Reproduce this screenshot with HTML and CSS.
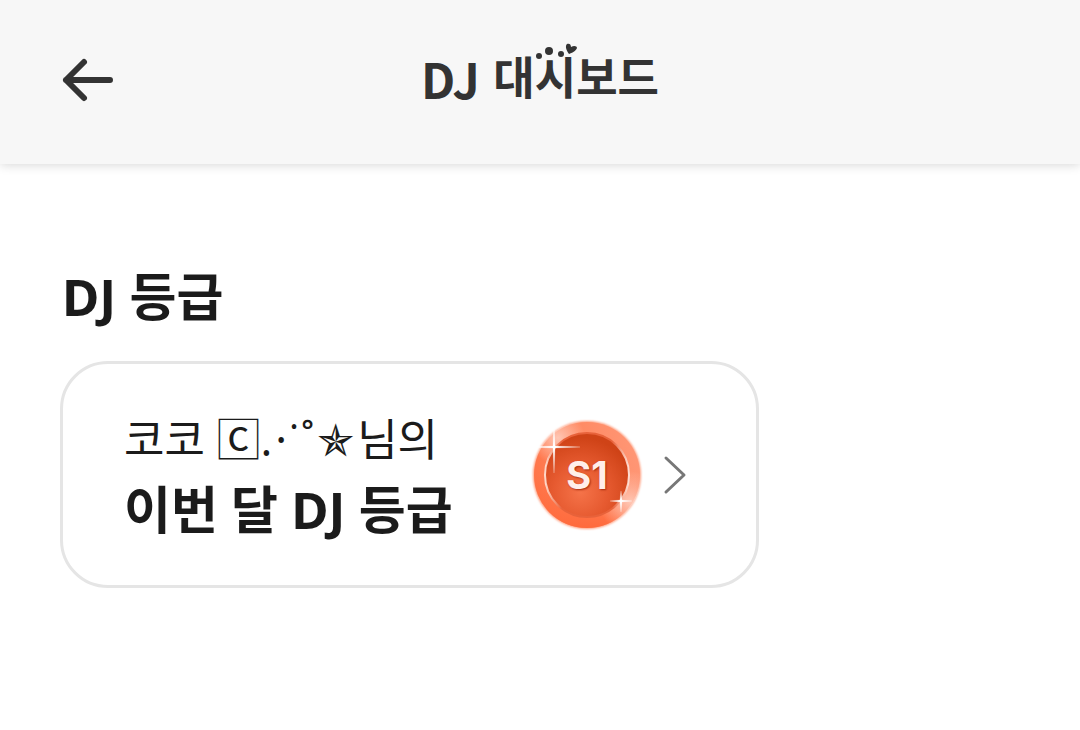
FILE: index.html
```html
<!DOCTYPE html>
<html lang="ko">
<head>
<meta charset="utf-8">
<meta name="viewport" content="width=device-width, initial-scale=1">
<title>DJ 대시보드</title>
<link rel="stylesheet" href="styles.css">
</head>
<body>
<header class="topbar">
  <button class="back" type="button" aria-label="뒤로">
    <svg width="56" height="48" viewBox="0 0 56 48" fill="none" stroke="#333" stroke-width="6" stroke-linecap="round" stroke-linejoin="round"><path d="M50 24H6M24 6L6 24l18 18"/></svg>
  </button>
  <h1 class="title">DJ <span class="hangul">대<span class="cute">시<svg class="ornament" width="42" height="18" viewBox="0 0 42 18" fill="#333" aria-hidden="true"><circle cx="4" cy="13" r="3"/><circle cx="14" cy="8" r="4"/><circle cx="26" cy="11" r="3"/><path d="M34 11C31 7 30 3 32 1c2-1 4 0 4 3 3-2 6-1 6 1-1 3-5 5-8 6z"/></svg></span>보드</span></h1>
</header>
<main class="content">
  <h2 class="heading section-title">DJ 등급</h2>
  <a class="card" href="#grade">
    <span class="card-text">
      <span class="name">코코 <span class="boxed">🄲</span>.<span class="dot">·</span><span class="dot">˙</span><span class="dot">˚</span><span class="star">✯</span>님의</span>
      <strong class="heading">이번 달 DJ 등급</strong>
    </span>
    <span class="grade">
      <svg class="medal" width="120" height="120" viewBox="0 0 120 120" aria-hidden="true">
        <defs>
          <linearGradient id="rim" x1="0" y1=".6" x2="1" y2=".4"><stop offset="0" stop-color="#ff7448"/><stop offset=".5" stop-color="#ff8a63"/><stop offset="1" stop-color="#ff9675"/></linearGradient>
          <radialGradient id="shine"><stop offset="0" stop-color="#ffd8cb" stop-opacity=".8"/><stop offset="1" stop-color="#ffd8cb" stop-opacity="0"/></radialGradient>
          <radialGradient id="face" cx=".42" cy=".7" r=".65"><stop offset="0" stop-color="#f57349"/><stop offset=".5" stop-color="#e65a30"/><stop offset="1" stop-color="#cf4317"/></radialGradient>
          <linearGradient id="edge" x1="0" y1="0" x2="1" y2="0"><stop offset="0" stop-color="#ffd9ca"/><stop offset=".2" stop-color="#e8623a"/><stop offset=".8" stop-color="#e8623a"/><stop offset="1" stop-color="#ffe0d5"/></linearGradient>
          <linearGradient id="low" x1="0" y1="0" x2="0" y2="1"><stop offset=".5" stop-color="#ff6a3c" stop-opacity="0"/><stop offset="1" stop-color="#ff6a3c"/></linearGradient>
          <filter id="soft"><feGaussianBlur stdDeviation="1"/></filter>
          <clipPath id="disc"><circle cx="60" cy="60" r="54"/></clipPath>
        </defs>
        <circle cx="60" cy="60" r="54" fill="#ff9b7a" filter="url(#soft)"/>
        <circle cx="60" cy="60" r="53" fill="url(#rim)"/>
        <circle cx="60" cy="60" r="53" fill="url(#low)"/>
        <g clip-path="url(#disc)"><circle cx="31" cy="23" r="27" fill="url(#shine)"/><circle cx="103" cy="87" r="31" fill="url(#shine)"/></g>
        <circle cx="60" cy="60" r="42" fill="url(#face)" stroke="url(#edge)" stroke-width="2"/>
        <path d="M27 8l1 23 25 1-25 1-1 25-1-25-24-1 24-1zM94 76l1 9 10 1-10 1-1 10-1-10-10-1 10-1z" fill="#fff" stroke="#fff" stroke-opacity=".2"/>
      </svg>
      <span class="level">S1</span>
    </span>
    <svg class="chevron" width="24" height="40" viewBox="0 0 24 40" fill="none" stroke="#777" stroke-width="3" stroke-linecap="round" stroke-linejoin="round" aria-hidden="true"><path d="M3 3l18 17L3 37"/></svg>
  </a>
</main>
</body>
</html>
```
FILE: styles.css
```css
* { box-sizing: border-box; }
body {
  margin: 0;
  background: #fff;
  color: #1b1b1b;
  font-family: "Noto Sans", "Noto Sans CJK KR", sans-serif;
}
.topbar {
  display: grid;
  grid-template-columns: 60px 1fr 60px;
  align-items: center;
  padding: 40px 60px 44px;
  background: #f7f7f7;
  box-shadow: 0 1px 10px rgba(0, 0, 0, 0.16);
}
.back {
  display: flex;
  padding: 0;
  border: 0;
  background: none;
  cursor: pointer;
}
.title {
  margin: 0;
  color: #333;
  font-family: "Noto Sans CJK KR", sans-serif;
  font-size: 48px;
  font-weight: 700;
  line-height: 76px;
  padding-bottom: 4px;
  text-align: center;
}
.hangul {
  font-size: 45px;
  line-height: 1;
  vertical-align: 4px;
}
.cute { position: relative; }
.ornament {
  position: absolute;
  left: 0;
  top: 0;
}
.content { padding: 96px 60px; }
.heading {
  display: block;
  margin: 0;
  font-size: 51px;
  font-weight: 700;
  line-height: 72px;
}
.section-title { padding-left: 2px; }
.card {
  display: flex;
  align-items: center;
  max-width: 699px;
  margin-top: 29px;
  padding: 41px 69px 40px 61px;
  border: 3px solid #e5e5e5;
  border-radius: 48px;
  color: inherit;
  text-decoration: none;
}
.card-text { flex: 1; white-space: nowrap; }
.name {
  display: block;
  font-size: 44px;
  line-height: 68px;
}
.boxed, .star {
  font-family: "DejaVu Sans", "Noto Sans CJK KR", sans-serif;
  line-height: 1;
}
.dot { padding-left: 3px; }
.star { padding: 0 3px; }
.grade {
  position: relative;
  display: grid;
  place-items: center;
  margin-right: 16px;
}
.medal { display: block; }
.level {
  position: absolute;
  color: #ffefea;
  font-family: Inter, sans-serif;
  font-size: 38px;
  font-weight: 700;
  text-shadow: 1px 1px 2px #a52c0c;
}
```
